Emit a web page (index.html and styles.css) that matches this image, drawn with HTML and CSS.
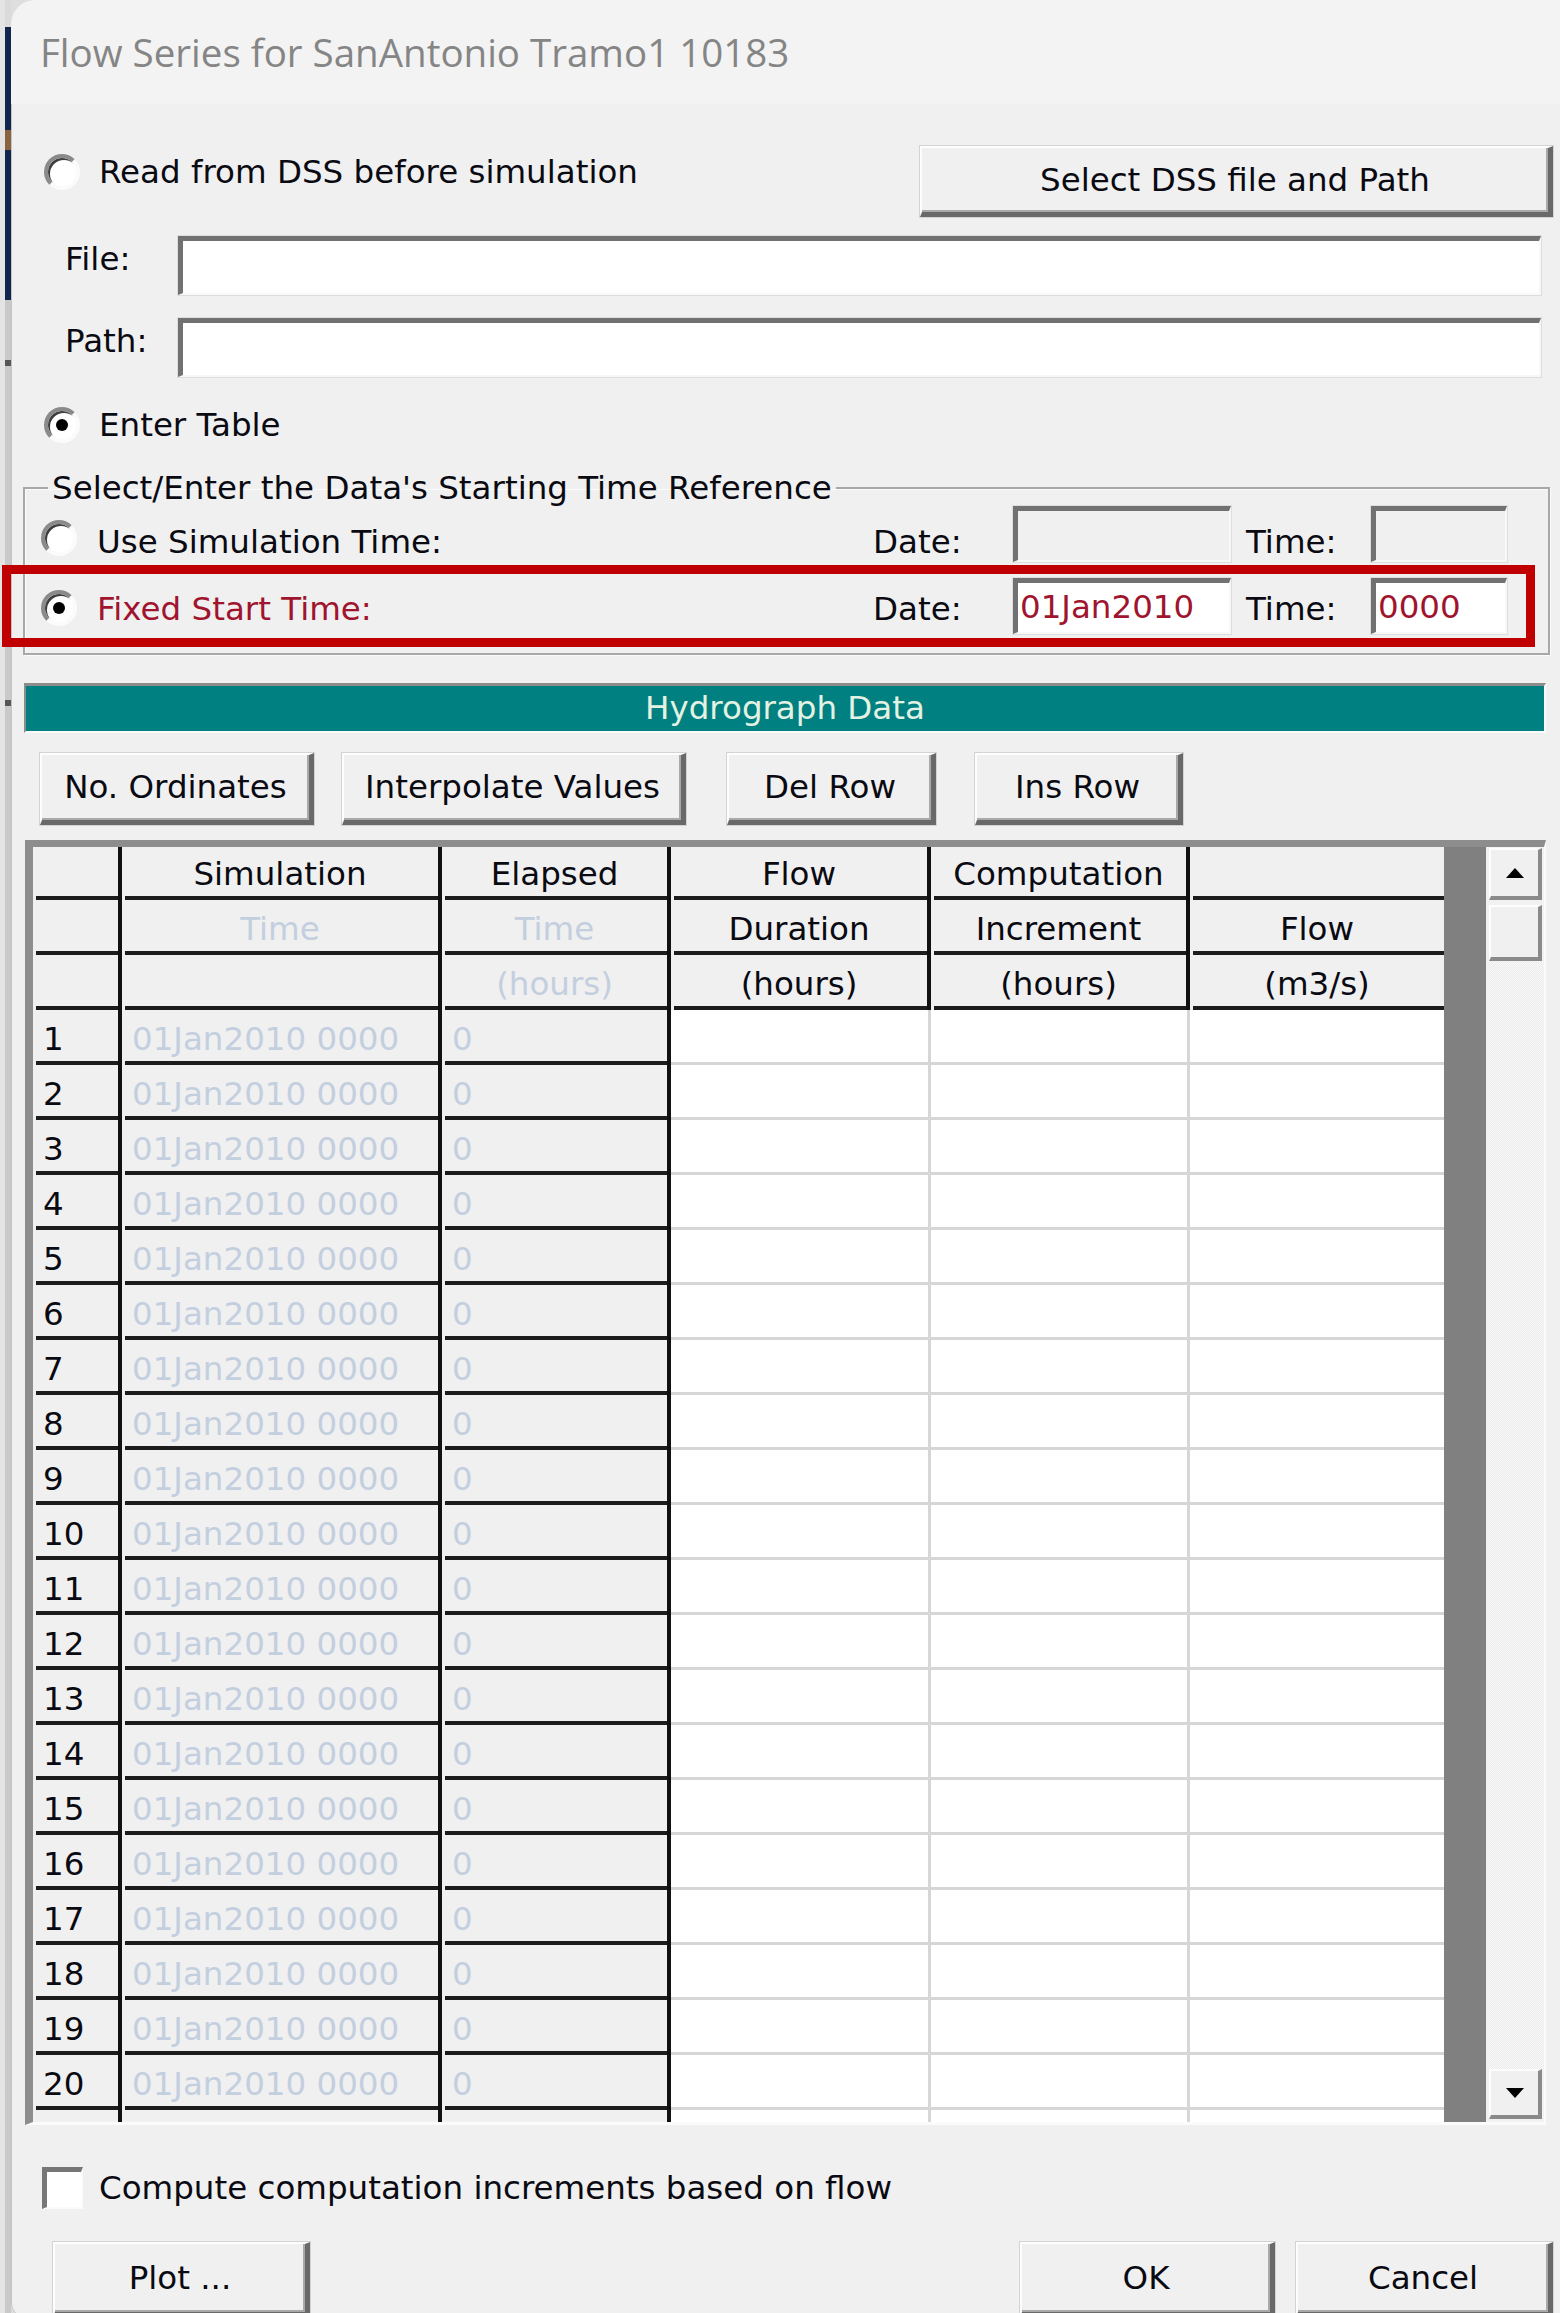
FILE: index.html
```html
<!DOCTYPE html>
<html>
<head>
<meta charset="utf-8">
<title>Flow Series</title>
<link rel="stylesheet" href="styles.css">
</head>
<body>
<div class="desk">
  <div class="strip"></div>
  <div class="window">
    <div class="titlebar">Flow Series for SanAntonio Tramo1 10183</div>

    <div class="row-dss">
      <div class="opt opt-dss"><span class="radio"></span><span>Read from DSS before simulation</span></div>
      <div class="btn btn-dss">Select DSS file and Path</div>
    </div>

    <div class="field-row row-file"><span class="flabel">File:</span><span class="input wide"></span></div>
    <div class="field-row row-path"><span class="flabel">Path:</span><span class="input wide"></span></div>

    <div class="opt opt-table"><span class="radio on"></span><span>Enter Table</span></div>

    <fieldset class="group">
      <legend>Select/Enter the Data's Starting Time Reference</legend>
      <div class="trow first">
        <span class="radio"></span><span class="tlabel">Use Simulation Time:</span>
        <span class="dlabel">Date:</span><span class="input date off"></span>
        <span class="tmlabel">Time:</span><span class="input time off"></span>
      </div>
      <div class="trow second">
        <span class="radio on"></span><span class="tlabel red">Fixed Start Time:</span>
        <span class="dlabel">Date:</span><span class="input date"><span class="val">01Jan2010</span></span>
        <span class="tmlabel">Time:</span><span class="input time"><span class="val">0000</span></span>
      </div>
    </fieldset>

    <div class="hydro">Hydrograph Data</div>

    <div class="tools">
      <div class="btn b-ord">No. Ordinates</div>
      <div class="btn b-int">Interpolate Values</div>
      <div class="btn b-del">Del Row</div>
      <div class="btn b-ins">Ins Row</div>
    </div>

    <div class="table">
      <div class="grid">
        <div class="c fx h1"></div><div class="c fx h1 ctr">Simulation</div><div class="c fx h1 ctr">Elapsed</div><div class="c fx h1 ctr">Flow</div><div class="c fx h1 ctr">Computation</div><div class="c fx h1 ctr last"></div>
        <div class="c fx"></div><div class="c fx ctr lt">Time</div><div class="c fx ctr lt">Time</div><div class="c fx ctr">Duration</div><div class="c fx ctr">Increment</div><div class="c fx ctr last">Flow</div>
        <div class="c fx"></div><div class="c fx"></div><div class="c fx ctr lt">(hours)</div><div class="c fx ctr">(hours)</div><div class="c fx ctr">(hours)</div><div class="c fx ctr last">(m3/s)</div>

        <div class="c fx num">1</div><div class="c fx lt">01Jan2010 0000</div><div class="c fx lt">0</div><div class="c ed"></div><div class="c ed"></div><div class="c ed last"></div>
        <div class="c fx num">2</div><div class="c fx lt">01Jan2010 0000</div><div class="c fx lt">0</div><div class="c ed"></div><div class="c ed"></div><div class="c ed last"></div>
        <div class="c fx num">3</div><div class="c fx lt">01Jan2010 0000</div><div class="c fx lt">0</div><div class="c ed"></div><div class="c ed"></div><div class="c ed last"></div>
        <div class="c fx num">4</div><div class="c fx lt">01Jan2010 0000</div><div class="c fx lt">0</div><div class="c ed"></div><div class="c ed"></div><div class="c ed last"></div>
        <div class="c fx num">5</div><div class="c fx lt">01Jan2010 0000</div><div class="c fx lt">0</div><div class="c ed"></div><div class="c ed"></div><div class="c ed last"></div>
        <div class="c fx num">6</div><div class="c fx lt">01Jan2010 0000</div><div class="c fx lt">0</div><div class="c ed"></div><div class="c ed"></div><div class="c ed last"></div>
        <div class="c fx num">7</div><div class="c fx lt">01Jan2010 0000</div><div class="c fx lt">0</div><div class="c ed"></div><div class="c ed"></div><div class="c ed last"></div>
        <div class="c fx num">8</div><div class="c fx lt">01Jan2010 0000</div><div class="c fx lt">0</div><div class="c ed"></div><div class="c ed"></div><div class="c ed last"></div>
        <div class="c fx num">9</div><div class="c fx lt">01Jan2010 0000</div><div class="c fx lt">0</div><div class="c ed"></div><div class="c ed"></div><div class="c ed last"></div>
        <div class="c fx num">10</div><div class="c fx lt">01Jan2010 0000</div><div class="c fx lt">0</div><div class="c ed"></div><div class="c ed"></div><div class="c ed last"></div>
        <div class="c fx num">11</div><div class="c fx lt">01Jan2010 0000</div><div class="c fx lt">0</div><div class="c ed"></div><div class="c ed"></div><div class="c ed last"></div>
        <div class="c fx num">12</div><div class="c fx lt">01Jan2010 0000</div><div class="c fx lt">0</div><div class="c ed"></div><div class="c ed"></div><div class="c ed last"></div>
        <div class="c fx num">13</div><div class="c fx lt">01Jan2010 0000</div><div class="c fx lt">0</div><div class="c ed"></div><div class="c ed"></div><div class="c ed last"></div>
        <div class="c fx num">14</div><div class="c fx lt">01Jan2010 0000</div><div class="c fx lt">0</div><div class="c ed"></div><div class="c ed"></div><div class="c ed last"></div>
        <div class="c fx num">15</div><div class="c fx lt">01Jan2010 0000</div><div class="c fx lt">0</div><div class="c ed"></div><div class="c ed"></div><div class="c ed last"></div>
        <div class="c fx num">16</div><div class="c fx lt">01Jan2010 0000</div><div class="c fx lt">0</div><div class="c ed"></div><div class="c ed"></div><div class="c ed last"></div>
        <div class="c fx num">17</div><div class="c fx lt">01Jan2010 0000</div><div class="c fx lt">0</div><div class="c ed"></div><div class="c ed"></div><div class="c ed last"></div>
        <div class="c fx num">18</div><div class="c fx lt">01Jan2010 0000</div><div class="c fx lt">0</div><div class="c ed"></div><div class="c ed"></div><div class="c ed last"></div>
        <div class="c fx num">19</div><div class="c fx lt">01Jan2010 0000</div><div class="c fx lt">0</div><div class="c ed"></div><div class="c ed"></div><div class="c ed last"></div>
        <div class="c fx num">20</div><div class="c fx lt">01Jan2010 0000</div><div class="c fx lt">0</div><div class="c ed"></div><div class="c ed"></div><div class="c ed last"></div>

        <div class="c fx nb"></div><div class="c fx nb"></div><div class="c fx nb"></div><div class="c ed nb"></div><div class="c ed nb"></div><div class="c ed nb last"></div>
      </div>
      <div class="band"></div>
      <div class="sb">
        <div class="sbtn"><svg width="20" height="12" viewBox="0 0 20 12"><polygon points="10,1 19,11 1,11" fill="#000"/></svg></div>
        <div class="thumb"></div>
        <div class="track"></div>
        <div class="sbtn down"><svg width="20" height="12" viewBox="0 0 20 12"><polygon points="1,1 19,1 10,11" fill="#000"/></svg></div>
      </div>
    </div>

    <div class="chk-row"><span class="chk"></span><span>Compute computation increments based on flow</span></div>

    <div class="bottom">
      <div class="btn b-plot">Plot ...</div>
      <div class="btn b-ok">OK</div>
      <div class="btn b-cancel">Cancel</div>
    </div>
  </div>
  <div class="highlight"></div>
</div>
</body>
</html>
```

FILE: styles.css
```css
html, body {
  margin: 0;
  padding: 0;
}
body {
  background: #dcdcdc;
  font-family: "DejaVu Sans", "Liberation Sans", sans-serif;
  font-size: 32.5px;
  line-height: 1.2;
  color: #0a0a12;
}
.desk {
  position: relative;
  width: 1560px;
  height: 2313px;
  overflow: hidden;
  display: flex;
  align-items: flex-start;
  background: #dedede;
}
.strip {
  width: 11px;
  height: 2313px;
  flex: none;
  background:
    linear-gradient(to right, #e4e4e4 0 5px, transparent 5px),
    linear-gradient(to bottom, #dadada 0 27px, #12264d 27px 130px, #8a6440 130px 150px, #12264d 150px 300px, #c9c9c9 300px 360px, #555 360px 366px, #c9c9c9 366px 700px, #555 700px 706px, #c9c9c9 706px);
}
.window {
  width: 1549px;
  min-height: 2313px;
  flex: none;
  background: #f0f0f0;
  border-top-left-radius: 24px;
  border-bottom-left-radius: 14px;
  box-shadow: inset 1px 0 0 #c4c4c4;
  display: flex;
  flex-direction: column;
  align-items: flex-start;
}
.window > * {
  flex-shrink: 0;
}
.titlebar {
  box-sizing: border-box;
  width: 100%;
  height: 104px;
  padding-left: 29px;
  display: flex;
  align-items: center;
  background: #f3f3f3;
  border-top-left-radius: 24px;
  font-family: "Open Sans", "Noto Sans", sans-serif;
  font-size: 38.5px;
  color: #858585;
}

/* radios */
.radio {
  box-sizing: border-box;
  width: 36px;
  height: 36px;
  flex: none;
  border-radius: 50%;
  border: 4px solid;
  border-color: #8a8a8a #fbfbfb #fbfbfb #8a8a8a;
  background: #fff;
  box-shadow: inset 2px 2px 0 #3e3e3e;
  position: relative;
}
.radio.on::after {
  content: "";
  position: absolute;
  left: 8px;
  top: 8px;
  width: 12px;
  height: 12px;
  border-radius: 50%;
  background: #000;
}
.opt {
  display: flex;
  align-items: center;
  gap: 19px;
  height: 36px;
}

/* buttons */
.btn {
  box-sizing: border-box;
  display: flex;
  align-items: center;
  justify-content: center;
  background: #f0f0f0;
  border-style: solid;
  border-width: 2px 5px 5px 2px;
  border-color: #fdfdfd #696969 #696969 #fdfdfd;
  box-shadow: inset -2px -2px 0 #a9a9a9, 0 0 0 1px #d3d3d3;
  color: #0a0a12;
  white-space: nowrap;
}

/* inputs */
.input {
  box-sizing: border-box;
  display: flex;
  align-items: center;
  background: #fff;
  border-style: solid;
  border-width: 5px 2px 2px 5px;
  border-color: #717171 #f8f8f8 #f8f8f8 #717171;
  box-shadow: 0 0 0 1px #dddddd;
}
.input.off {
  background: #f0f0f0;
}
.input .val {
  padding-left: 2px;
  color: #a0142e;
}

.row-dss {
  margin-top: 42px;
  width: 1549px;
  height: 71px;
  display: flex;
  align-items: flex-start;
}
.opt-dss {
  margin-left: 33px;
  margin-top: 8px;
}
.btn-dss {
  margin-left: auto;
  margin-right: 7px;
  width: 633px;
  height: 71px;
}

.field-row {
  display: flex;
  align-items: flex-start;
  height: 59px;
  margin-left: 54px;
}
.row-file { margin-top: 19px; }
.row-path { margin-top: 23px; }
.flabel {
  width: 113px;
  line-height: 46px;
}
.input.wide {
  width: 1363px;
  height: 59px;
}

.opt-table {
  margin-top: 30px;
  margin-left: 33px;
}

/* group box */
.group {
  box-sizing: border-box;
  margin: 27px 0 0 12px;
  width: 1527px;
  min-width: 0;
  border: 2px solid #a8a8a8;
  box-shadow: inset 1px 1px 0 #fbfbfb, 1px 1px 0 #fbfbfb;
  padding: 0 0 19px 16px;
}
.group legend {
  padding: 0 4px;
  margin-left: 7px;
  line-height: 36px;
}
.trow {
  display: flex;
  align-items: center;
  height: 56px;
}
.trow.second {
  margin-top: 16px;
}
.tlabel {
  margin-left: 20px;
  width: 776px;
}
.tlabel.red {
  color: #a0142e;
}
.dlabel {
  width: 140px;
}
.tmlabel {
  margin-left: 15px;
  width: 125px;
}
.trow.first .radio { margin-top: 8px; }
.trow.first .tlabel,
.trow.first .dlabel,
.trow.first .tmlabel { padding-top: 16px; }
.trow.second .radio { margin-top: 4px; }
.trow.second .tlabel,
.trow.second .dlabel,
.trow.second .tmlabel { padding-top: 6px; }
.input.date {
  width: 218px;
  height: 56px;
}
.input.time {
  width: 136px;
  height: 56px;
}

/* hydrograph bar */
.hydro {
  box-sizing: border-box;
  margin-top: 28px;
  margin-left: 13px;
  width: 1522px;
  height: 50px;
  background: #008080;
  border-style: solid;
  border-width: 3px 2px 2px 2px;
  border-color: #8c8c8c #fbfbfb #fbfbfb #8c8c8c;
  color: #e3f2e3;
  display: flex;
  align-items: center;
  justify-content: center;
}

.tools {
  margin-top: 20px;
  height: 72px;
  display: flex;
}
.tools .btn { height: 72px; }
.b-ord { margin-left: 29px; width: 274px; }
.b-int { margin-left: 28px; width: 344px; }
.b-del { margin-left: 41px; width: 209px; }
.b-ins { margin-left: 39px; width: 208px; }

/* table */
.table {
  box-sizing: border-box;
  margin-top: 15px;
  margin-left: 14px;
  width: 1521px;
  height: 1285px;
  border-style: solid;
  border-width: 7px 2px 3px 8px;
  border-color: #8d8d8d #fbfbfb #fbfbfb #8d8d8d;
  display: flex;
  background: #fff;
}
.grid {
  width: 1411px;
  flex: none;
  display: grid;
  grid-template-columns: 89px 320px 229px 260px 259px 254px;
  grid-template-rows: 53px repeat(22, 55px) 12px;
  overflow: hidden;
}
.c {
  box-sizing: border-box;
  display: flex;
  align-items: center;
  white-space: nowrap;
  overflow: hidden;
}
.fx {
  background: linear-gradient(#1c1c1c, #1c1c1c) no-repeat 3px 100% / calc(100% - 3px) 4px, #f0f0f0;
  border-right: 4px solid #111;
  padding: 4px 0 0 10px;
}
.fx.h1 {
  padding-top: 2px;
}
.ed {
  background: #fff;
  border-right: 3px solid #d6d6d6;
  border-bottom: 3px solid #d6d6d6;
}
.c.last {
  border-right: 0;
}
.c.nb {
  background: #f0f0f0;
  border-bottom: 0;
}
.c.ed.nb {
  background: #fff;
}
.ctr {
  justify-content: center;
  padding-left: 0;
}
.lt {
  color: #c3cfdf;
}
.band {
  width: 42px;
  flex: none;
  background: #808080;
}
.sb {
  box-sizing: border-box;
  width: 58px;
  flex: none;
  padding: 1px 2px 3px 3px;
  display: flex;
  flex-direction: column;
  background: repeating-conic-gradient(#f7f7f7 0 25%, #ececec 0 50%) 0 0 / 2px 2px;
}
.sbtn, .thumb {
  box-sizing: border-box;
  flex-shrink: 0;
  background: #f0f0f0;
  border-style: solid;
  border-width: 2px 4px 4px 2px;
  border-color: #fdfdfd #8a8a8a #8a8a8a #fdfdfd;
  display: flex;
  align-items: center;
  justify-content: center;
}
.sbtn {
  height: 52px;
}
.sbtn.down {
  height: 50px;
}
.thumb {
  margin-top: 5px;
  height: 56px;
}
.track {
  flex: 1;
}

/* checkbox */
.chk-row {
  margin-top: 42px;
  margin-left: 31px;
  height: 42px;
  display: flex;
  align-items: center;
  gap: 16px;
}
.chk {
  box-sizing: border-box;
  width: 41px;
  height: 42px;
  background: #fff;
  border-style: solid;
  border-width: 5px 2px 2px 5px;
  border-color: #777 #fbfbfb #fbfbfb #777;
}

.bottom {
  margin-top: 33px;
  display: flex;
  height: 75px;
}
.bottom .btn { height: 75px; }
.b-plot { margin-left: 42px; width: 257px; }
.b-ok { margin-left: 710px; width: 255px; }
.b-cancel { margin-left: 21px; width: 257px; }

/* red annotation rectangle */
.highlight {
  position: absolute;
  left: 2px;
  top: 565px;
  width: 1533px;
  height: 82px;
  box-sizing: border-box;
  border: 9px solid #c00000;
}
```
